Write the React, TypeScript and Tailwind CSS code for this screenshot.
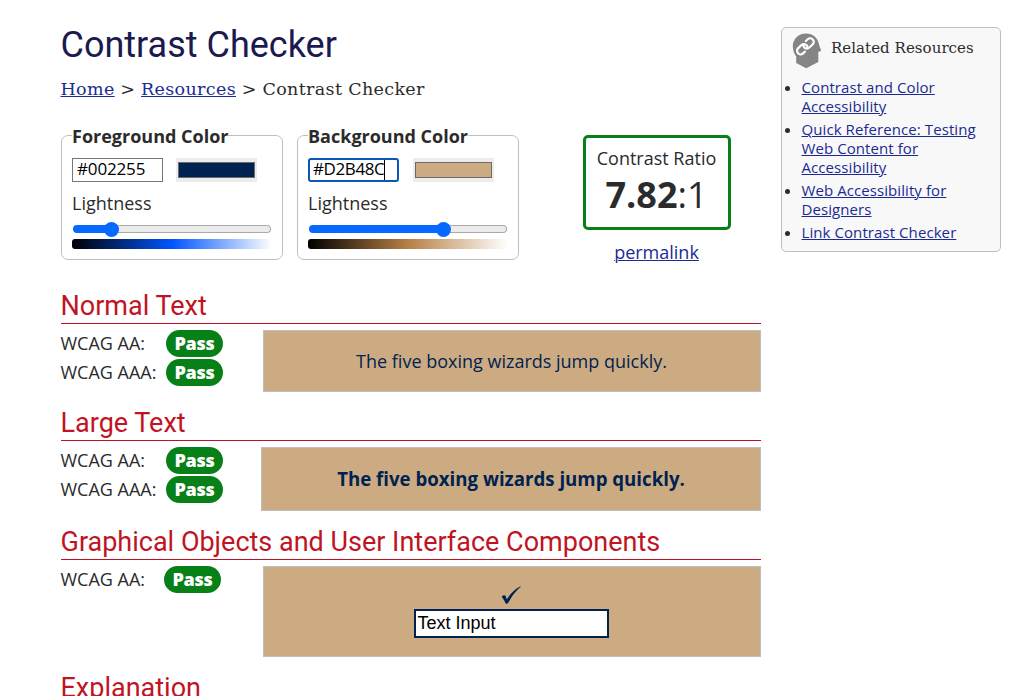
import React from "react";

type PickerProps = {
  title: string;
  value: string;
  focused?: boolean;
  swatch: string;
  fill: string;
  gradient: string;
  spacing: string;
};

function ColorPicker({ title, value, focused, swatch, fill, gradient, spacing }: PickerProps) {
  return (
    <section className="h-[125px] w-[222px] rounded-[7px] border border-[#bfbfbf] pl-[10px]">
      <div className="-mt-[12px] flex h-[24px] items-center">
        <h2 className="bg-white text-[18px] leading-[24px] font-bold whitespace-nowrap">{title}</h2>
      </div>
      <div className="mt-[10px] flex h-[24px]">
        <div
          className={
            focused
              ? "flex h-[24px] w-[91px] items-center rounded-[3px] border-2 border-[#0b57b7] pl-[3px] text-black"
              : "flex h-[24px] w-[91px] items-center border border-[#767676] pl-[4px] text-black"
          }
        >
          <span className={"text-[17px] leading-[20px] -mt-[2px] " + spacing}>{value}</span>
          {focused && <span className="h-[20px] w-px bg-black" />}
        </div>
        <div className={(focused ? "ml-[14px]" : "ml-[13px]") + " h-[24px] w-[81px] bg-[#ececec] px-[2px] py-[4px]"}>
          <div className={"h-[16px] border border-[#6b6b6b] " + swatch} />
        </div>
      </div>
      <div className="mt-[9px] h-[25px] text-[18px] leading-[25px]">Lightness</div>
      <div className="mt-[5px] flex h-[16px] w-[199px] items-center">
        <div className={"h-[8px] rounded-l-full bg-[#0668ff] ml-px " + fill} />
        <div className="z-10 -mx-[7px] size-[15px] shrink-0 rounded-full bg-[#0668ff]" />
        <div className="h-[8px] grow rounded-r-full border border-l-0 border-[#aaaaaa] bg-[#ebebeb]" />
      </div>
      <div className={"mt-[2px] h-[10px] w-[200px] rounded-[3px] bg-linear-to-r/srgb " + gradient} />
    </section>
  );
}

function Heading({ children }: { children: React.ReactNode }) {
  return (
    <h2 className="h-[36px] border-b border-[#bb1122] text-[27px] leading-[36px] font-normal whitespace-nowrap text-[#c01424] font-['Roboto',sans-serif]">
      <span className="-ml-[0.5px]">{children}</span>
    </h2>
  );
}

function Result({ label, shift }: { label: string; shift?: boolean }) {
  return (
    <div className="flex h-[29px] items-start">
      <span className={(shift ? "w-[103px]" : "w-[105px]") + " shrink-0 text-[18px] leading-[27px] whitespace-nowrap"}>
        <span className="-ml-[0.5px]">{label}</span>
      </span>
      <span className="flex h-[27px] w-[57px] items-center justify-center rounded-full bg-[#078018] text-[18px] leading-[27px] font-extrabold tracking-[-0.3px] text-white">
        Pass
      </span>
    </div>
  );
}

const link = "text-[#1b2b93] underline decoration-1";

export default function App() {
  return (
    <div className="flex h-[696px] w-[1012px] overflow-hidden bg-white font-['Open_Sans',sans-serif] text-[#2b2b2b]">
      <main className="ml-[61px] w-[700px] shrink-0">
        <h1 className="-ml-[0.5px] pt-[21px] text-[36px] leading-[48px] font-normal whitespace-nowrap text-[#1a1a50] font-['Roboto',sans-serif]">Contrast Checker</h1>
        <nav className="-ml-[0.5px] mt-[8px] flex h-[24px] items-center gap-[5.7px] text-[17.5px] tracking-[0.35px] whitespace-nowrap font-['DejaVu_Serif',serif]">
          <a className={link}>Home</a>
          <span>&gt;</span>
          <a className={link}>Resources</a>
          <span>&gt;</span>
          <span>Contrast Checker</span>
        </nav>
        <div className="mt-[34px] flex h-[125px]">
          <ColorPicker title="Foreground Color" value="#002255" swatch="bg-[#002250]" fill="w-[38px]" gradient="from-black via-[#0055ff] to-white" spacing="tracking-[-0.15px]" />
          <div className="w-[14px]" />
          <ColorPicker title="Background Color" value="#D2B48C" focused swatch="bg-[#cdab82]" fill="w-[134px]" gradient="from-black via-[#b58145] to-white" spacing="tracking-[-0.4px]" />
          <div className="ml-[64px] w-[148px]">
            <div className="h-[95px] rounded-[5px] border-[3px] border-[#078018] pr-px text-center">
              <div className="pt-[8px] text-[18px] leading-[24px] whitespace-nowrap">Contrast Ratio</div>
              <div className="mt-px text-[36px] leading-[48px] whitespace-nowrap"><b>7.82</b>:1</div>
            </div>
            <div className="mt-[10px] pr-px text-center text-[18px] leading-[25px]"><a className={link}>permalink</a></div>
          </div>
        </div>

        <div className="mt-[28px]">
          <Heading>Normal Text</Heading>
          <div className="mt-[6px] flex h-[62px] justify-between">
            <div><Result label="WCAG AA:" /><Result label="WCAG AAA:" /></div>
            <div className="flex w-[498px] items-center justify-center border border-[#bfbfbf] bg-[#cdab82] pr-px text-[18px] text-[#002250]">The five boxing wizards jump quickly.</div>
          </div>
        </div>

        <div className="mt-[13px]">
          <Heading>Large Text</Heading>
          <div className="mt-[6px] flex h-[64px] justify-between">
            <div><Result label="WCAG AA:" /><Result label="WCAG AAA:" /></div>
            <div className="flex w-[500px] items-center justify-center border border-[#bfbfbf] bg-[#cdab82] text-[18.67px] font-bold text-[#002250]">The five boxing wizards jump quickly.</div>
          </div>
        </div>

        <div className="mt-[13px]">
          <Heading>Graphical Objects and User Interface Components</Heading>
          <div className="mt-[6px] flex h-[91px] justify-between">
            <div><Result label="WCAG AA:" shift /></div>
            <div className="flex w-[498px] flex-col items-center border border-[#bfbfbf] bg-[#cdab82] pr-[2px]">
              <svg className="mt-[19px] h-[19px] w-[20px]" viewBox="0 0 20 19" fill="#002250">
                <path d="M.8 11C1.2 9.3 3.9 8.8 4.6 10.1C5.1 11 5.1 12.2 5.8 13.2C9.2 8.2 13.4 3.2 19.4 .2L19.6 .9C14.6 5 11 9.6 7.2 17L5 18C3.7 16 3 13.2 .8 11Z" />
              </svg>
              <div className="mt-[4px] flex h-[29px] w-[195px] items-center border-2 border-[#002250] bg-white pl-[2px] text-[18px] leading-[22px] text-black font-['Liberation_Sans',sans-serif]"><span className="-mt-px">Text Input</span></div>
            </div>
          </div>
        </div>

        <div className="mt-[13px]"><Heading>Explanation</Heading></div>
      </main>

      <aside className="mt-[27px] ml-[20px] h-[225px] w-[220px] shrink-0 rounded-[5px] border border-[#bfbfbf] bg-[#f8f8f8]">
        <div className="flex h-[50px] pl-[10px]">
          <svg className="mt-[5px] h-[36px] w-[30px] shrink-0" viewBox="0 0 30 36">
            <path d="M14 .5C6 .5 .8 6.2 .8 13.5C.8 18 2.5 21 4.2 23.5V30L14.2 35.3L26.3 29V18.9L29.2 17.8C28.6 15.8 27.5 13.5 27 11.5C26 5 21 .5 14 .5Z" fill="#858585" />
            <g transform="translate(13.4 13.3) rotate(-43)" fill="none" stroke="#fff" strokeWidth="2.2" strokeLinecap="round">
              <path d="M-4 3.6H-6.5A3.6 3.6 0 0 1 -6.5-3.6H-2A3.6 3.6 0 0 1 1.6 0A3.6 3.6 0 0 1 .6 2.5" />
              <path d="M4-3.6H6.5A3.6 3.6 0 0 1 6.5 3.6H2A3.6 3.6 0 0 1-1.6 0A3.6 3.6 0 0 1-.6-2.5" />
            </g>
          </svg>
          <h2 className="mt-[8px] ml-[9px] text-[15px] leading-[24px] font-normal whitespace-nowrap tracking-[0.05px] font-['DejaVu_Serif',serif]">Related Resources</h2>
        </div>
        <ul className="list-disc pl-[19.5px] text-[15px] leading-[19px] whitespace-nowrap tracking-[0.08px] [&>li]:mb-[4px]">
          <li><a className={link}>Contrast and Color<br />Accessibility</a></li>
          <li><a className={link}>Quick Reference: Testing<br />Web Content for<br />Accessibility</a></li>
          <li><a className={link}>Web Accessibility for<br />Designers</a></li>
          <li><a className={link}>Link Contrast Checker</a></li>
        </ul>
      </aside>
    </div>
  );
}
